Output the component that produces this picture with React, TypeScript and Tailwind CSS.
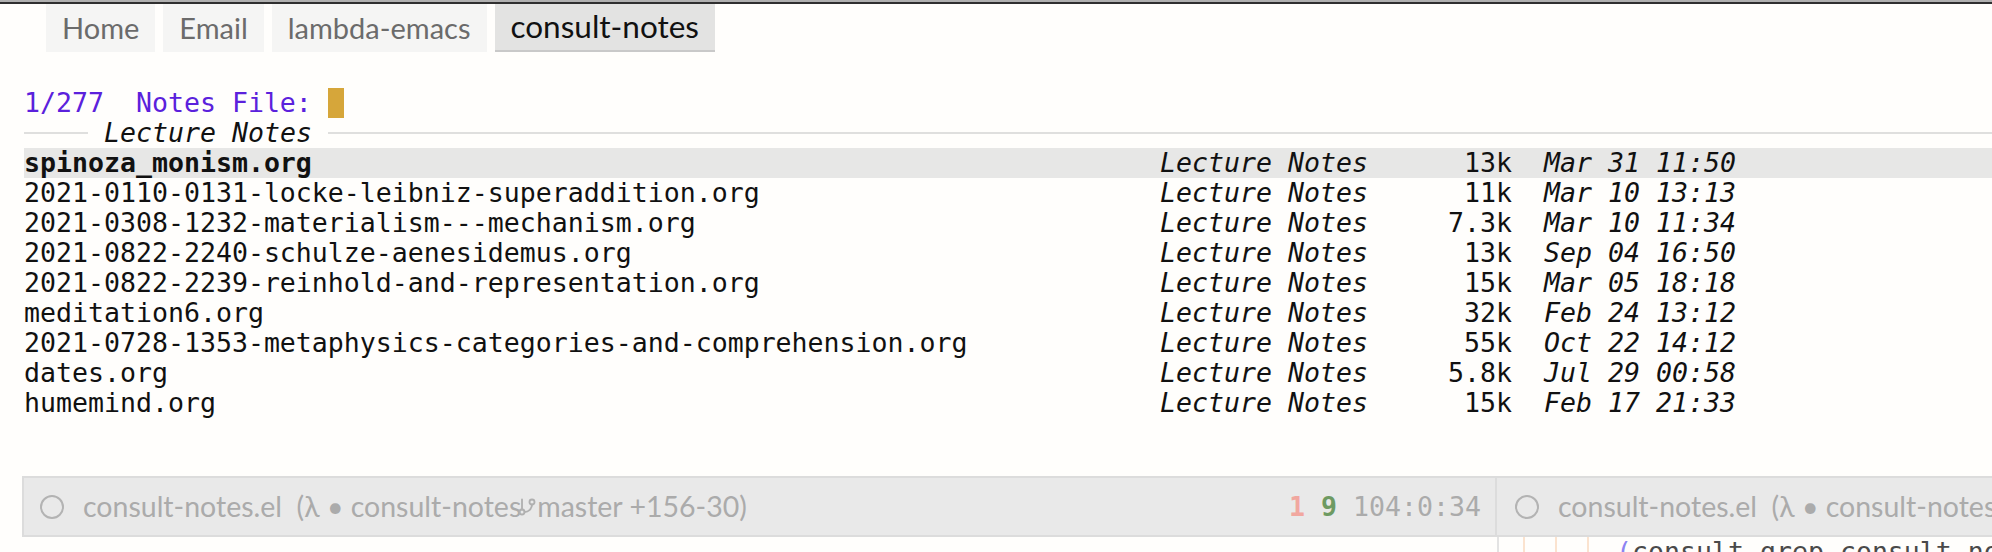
import { GitBranch } from "lucide-react";

const files = [
  { name: "spinoza_monism.org", size: "13k", date: "Mar 31 11:50" },
  { name: "2021-0110-0131-locke-leibniz-superaddition.org", size: "11k", date: "Mar 10 13:13" },
  { name: "2021-0308-1232-materialism---mechanism.org", size: "7.3k", date: "Mar 10 11:34" },
  { name: "2021-0822-2240-schulze-aenesidemus.org", size: "13k", date: "Sep 04 16:50" },
  { name: "2021-0822-2239-reinhold-and-representation.org", size: "15k", date: "Mar 05 18:18" },
  { name: "meditation6.org", size: "32k", date: "Feb 24 13:12" },
  { name: "2021-0728-1353-metaphysics-categories-and-comprehension.org", size: "55k", date: "Oct 22 14:12" },
  { name: "dates.org", size: "5.8k", date: "Jul 29 00:58" },
  { name: "humemind.org", size: "15k", date: "Feb 17 21:33" },
];

const tabs = ["Home", "Email", "lambda-emacs", "consult-notes"];

const mono = "font-['DejaVu_Sans_Mono',monospace] text-[26.57px] leading-[30px]";
const sans = "font-['Lato',sans-serif]";

function BufferName({ children }: { children: React.ReactNode }) {
  return (
    <div className={`flex items-center gap-[19px] text-[28.5px] text-[#ababab] ${sans}`}>
      <div className="w-[24px] h-[24px] rounded-full border-2 border-[#b3b3b3] shrink-0" />
      <span className="whitespace-pre flex items-center">{children}</span>
    </div>
  );
}

export default function App() {
  return (
    <div className="w-[1992px] h-[552px] overflow-hidden bg-[#fffefc] flex flex-col">
      {/* window border */}
      <div className="shrink-0 h-[2px] bg-[#b0b0b0]" />
      <div className="shrink-0 h-[2px] bg-[#2f2f2f]" />

      {/* tab bar */}
      <div className={`shrink-0 flex gap-2 pl-[46px] h-[48px] ${sans}`}>
        {tabs.map((t, i) => {
          const active = i === tabs.length - 1;
          return (
            <div
              key={t}
              className={
                active
                  ? "flex items-center px-4 bg-[#e3e3e2] text-[#111] text-[31.5px] border-b-2 border-[#c9c9c9]"
                  : "flex items-center px-4 bg-[#f5f5f4] text-[#6b6b6b] text-[29px]"
              }
            >
              {t}
            </div>
          );
        })}
      </div>

      {/* minibuffer */}
      <div className={`shrink-0 mt-[36px] pl-[24px] ${mono}`}>
        <div className="flex items-center h-[30px] text-[#5b21dc] whitespace-pre">
          <span>1/277  Notes File: </span>
          <span className="w-[16px] h-[30px] bg-[#d6a63a]" />
        </div>

        <div className="flex items-center h-[30px]">
          <div className="w-[64px] h-[2px] bg-[#dfdfde]" />
          <span className="ml-[16px] italic text-[#111]">Lecture Notes</span>
          <div className="flex-1 ml-[16px] h-[2px] bg-[#dfdfde]" />
        </div>

        {files.map((f, i) => (
          <div
            key={f.name}
            className={`flex h-[30px] whitespace-pre text-[#111] ${i === 0 ? "bg-[#e7e7e6]" : ""}`}
          >
            <span className={`w-[1136px] ${i === 0 ? "font-bold" : ""}`}>{f.name}</span>
            <span className="w-[208px] italic">Lecture Notes</span>
            <span className="w-[144px] text-right">{f.size}</span>
            <span className="ml-[32px] italic">{f.date}</span>
          </div>
        ))}
      </div>

      {/* mode line */}
      <div className="shrink-0 mt-[58px] ml-[22px] h-[61px] flex border-2 border-r-0 border-[#dcdcdc] bg-[#e9e9e9]">
        <div className="w-[1473px] shrink-0 flex items-center justify-between pl-[16px] pr-[14px] border-r-2 border-[#dcdcdc]">
          <BufferName>
            consult-notes.el  (λ • consult-notes
            <GitBranch className="w-[20px] h-[22px] -ml-[4px] text-[#b0b0b0]" strokeWidth={2.2} />
            master +156-30)
          </BufferName>
          <div className={`${mono} whitespace-pre text-[#ababab]`}>
            <span className="font-bold text-[#f1a79f]">1</span>{" "}
            <span className="font-bold text-[#6e9a62]">9</span> 104:0:34
          </div>
        </div>
        <div className="flex-1 flex items-center pl-[18px] overflow-hidden whitespace-nowrap">
          <BufferName>consult-notes.el  (λ • consult-notes</BufferName>
        </div>
      </div>

      {/* code window peek */}
      <div className="shrink-0 flex h-[30px]">
        <div className="w-[1497px] shrink-0" />
        <div className="w-[2px] shrink-0 bg-[#e3e3e3]" />
        <div className={`flex-1 flex pl-[21px] ${mono} whitespace-pre text-[#4a4a4a] overflow-hidden`}>
          <div className="w-[32px] shrink-0 flex"><div className="ml-[3px] w-[2px] bg-[#fbe3cf]" /></div>
          <div className="w-[32px] shrink-0 flex"><div className="ml-[3px] w-[2px] bg-[#fbe3cf]" /></div>
          <div className="w-[32px] shrink-0 flex"><div className="ml-[3px] w-[2px] bg-[#fbe3cf]" /></div>
          <span className="text-[#8c84f2]">(</span>
          <span>consult-grep consult-notes-dir</span>
        </div>
      </div>
    </div>
  );
}
